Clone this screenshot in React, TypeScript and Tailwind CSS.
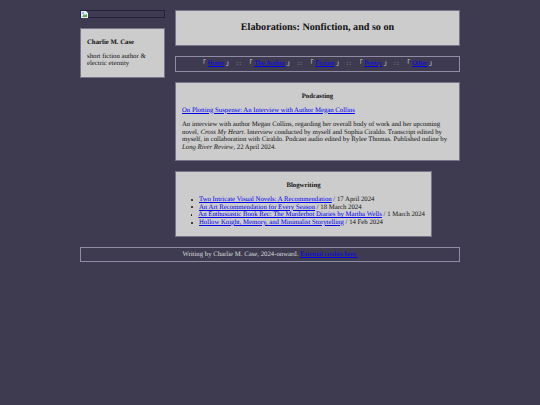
const linkClass = 'text-[#0000ee] underline';

function Nav({ label }: { label: string }) {
  return (
    <span className="text-[#dddddd]">
      「 <a href="#" className={linkClass}>{label}</a> 」
    </span>
  );
}

function Sep() {
  return <span className="mx-[1px] tracking-[1px] text-[#aaa9b5]"> :: </span>;
}

export default function App() {
  const blog = [
    ['Two Intricate Visual Novels: A Recommendation', '17 April 2024'],
    ['An Art Recommendation for Every Season', '18 March 2024'],
    ['An Enthusiastic Book Rec: The Murderbot Diaries by Martha Wells', '1 March 2024'],
    ['Hollow Knight, Memory, and Minimalist Storytelling', '14 Feb 2024'],
  ];

  return (
    <div className="min-h-[405px] bg-[#3e3b50] font-['Liberation_Serif','Noto_Sans_CJK_JP',serif] text-[6.75px] leading-[7.6px] text-[#111111] antialiased [text-rendering:geometricPrecision]">
      <div className="mx-auto flex w-[380px] flex-col pt-[10px]">
        <div className="flex gap-[10px]">
          <aside className="flex w-[85px] flex-col gap-[10px]">
            <div className="h-[8px] border border-[#23213a] bg-[#3e3b50]">
              <svg width="7" height="7" viewBox="0 0 7 7" className="block">
                <path d="M0 0h5l2 2v5H0z" fill="#e8eef5" />
                <path d="M1 6l2-3 1 1 2-1v3z" fill="#5aa85a" />
                <path d="M1 1h2v2H1z" fill="#8fb4e8" />
              </svg>
            </div>
            <div className="h-[50px] border border-[#77748c] bg-[#cccccc] px-[6px] pt-[9.5px]">
              <p className="font-bold">Charlie M. Case</p>
              <p className="mt-[6.5px]">short fiction author &amp; electric eternity</p>
            </div>
          </aside>

          <main className="flex w-[285px] flex-col items-start">
            <header className="flex h-[36px] w-full items-center justify-center border border-[#77748c] bg-[#cccccc]">
              <h1 className="text-[10.13px] leading-[14px] font-bold">Elaborations: Nonfiction, and so on</h1>
            </header>

            <nav className="mt-[10px] flex h-[15.5px] w-full items-center justify-center border border-[#8f8ca3] text-[#dddddd]">
              <p className="whitespace-pre-wrap">
                <Nav label="Home" /><Sep /><Nav label="The Author" /><Sep /><Nav label="Fiction" /><Sep /><Nav label="Poetry" /><Sep /><Nav label="Other" />
              </p>
            </nav>

            <section className="mt-[10px] h-[79.5px] w-full border border-[#77748c] bg-[#cccccc] px-[6px] pt-[10px]">
              <h2 className="text-center font-bold">Podcasting</h2>
              <p className="mt-[6.5px]">
                <a href="#" className={linkClass}>On Plotting Suspense: An Interview with Author Megan Collins</a>
              </p>
              <p className="mt-[7px]">
                An interview with author Megan Collins, regarding her overall body of work and her upcoming novel, <i>Cross My Heart</i>. Interview conducted by myself and Sophia Ciraldo. Transcript edited by myself, in collaboration with Ciraldo. Podcast audio edited by Rylee Thomas. Published online by <i>Long River Review</i>, 22 April 2024.
              </p>
            </section>

            <section className="mt-[10px] h-[65.5px] w-[257px] border border-[#77748c] bg-[#cccccc] px-[6px] pt-[10px]">
              <h2 className="text-center font-bold">Blogwriting</h2>
              <ul className="mt-[6.5px] pl-[9px]">
                {blog.map(([title, date]) => (
                  <li key={title} className="flex items-center whitespace-pre">
                    <span className="mr-[6px] size-[2px] rounded-full bg-[#111111]" />
                    <span>
                      <a href="#" className={linkClass}>{title}</a> / {date}
                    </span>
                  </li>
                ))}
              </ul>
            </section>
          </main>
        </div>

        <footer className="mt-[10px] flex h-[15px] items-center justify-center border border-[#8f8ca3] pt-[1px] text-[#dddddd]">
          <p>
            Writing by Charlie M. Case, 2024-onward. <a href="#" className={linkClass}>External credits here.</a>
          </p>
        </footer>
      </div>
    </div>
  );
}
